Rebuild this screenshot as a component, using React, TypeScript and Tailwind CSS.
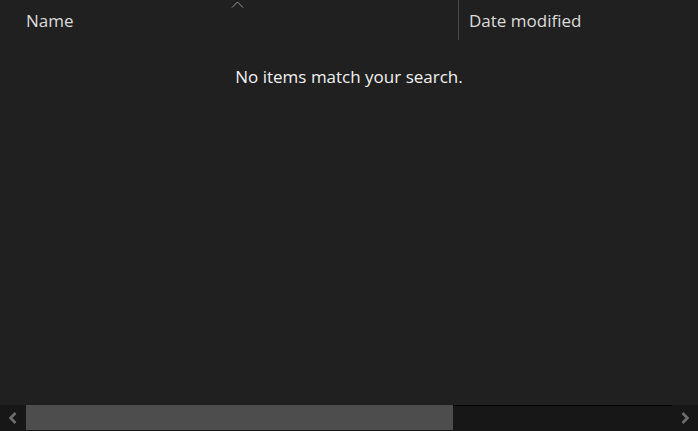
export default function App() {
  return (
    <div className="flex h-[431px] w-[698px] flex-col overflow-hidden bg-[#202020] font-['Segoe_UI','Open_Sans',sans-serif] text-[17px]">
      <div className="relative flex h-[40px] shrink-0">
        <div className="flex w-[458px] items-center pl-[26px] pt-[2px] text-[#dcdcdc]">Name</div>
        <svg className="absolute left-[231px] top-[1px]" width="13" height="8" viewBox="0 0 13 8">
          <path d="M1 6.5 L6.5 1 L12 6.5" fill="none" stroke="#9a9a9a" strokeWidth="1" />
        </svg>
        <div className="w-px bg-[#4a4a4a]" />
        <div className="flex flex-1 items-center pl-[10px] pt-[2px] text-[#dcdcdc]">Date modified</div>
      </div>
      <div className="flex flex-1 justify-center pt-[24px]">
        <div className="leading-[26px] text-[#f2f2f2]">No items match your search.</div>
      </div>
      <div className="flex h-[26px] shrink-0 bg-[#171717]">
        <div className="flex w-[26px] items-center justify-center">
          <svg width="12" height="14" viewBox="0 0 12 14">
            <path d="M8.5 2 L3.5 7 L8.5 12" fill="none" stroke="#6e6e6e" strokeWidth="2.6" />
          </svg>
        </div>
        <div className="mb-[1px] w-[427px] bg-[#4d4d4d]" />
        <div className="flex-1 border-t border-black" />
        <div className="flex w-[26px] items-center justify-center">
          <svg width="12" height="14" viewBox="0 0 12 14">
            <path d="M3.5 2 L8.5 7 L3.5 12" fill="none" stroke="#6e6e6e" strokeWidth="2.6" />
          </svg>
        </div>
      </div>
    </div>
  );
}
